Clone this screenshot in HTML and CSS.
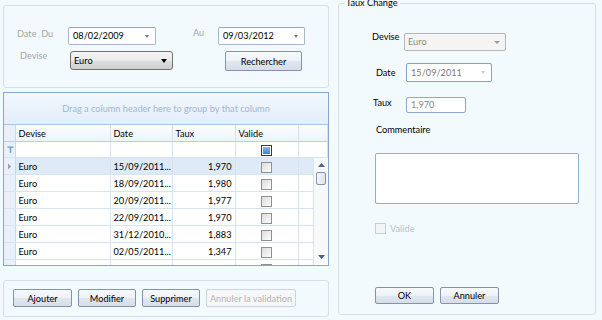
FILE: index.html
```html
<!DOCTYPE html>
<html lang="fr">
<head>
  <meta charset="UTF-8" />
  <title>Taux de change</title>
  <link rel="stylesheet" href="styles.css">
</head>
<body>
  <div class="window">
    <div class="left">
      <div class="box search">
        <div class="row row-dates">
          <label class="lbl lbl-du">Date&nbsp; Du</label>
          <div class="date-input w-du"><span>08/02/2009</span><i class="drop"></i></div>
          <label class="lbl lbl-au">Au</label>
          <div class="date-input w-au"><span>09/03/2012</span><i class="drop"></i></div>
        </div>
        <div class="row row-devise">
          <label class="lbl lbl-devise">Devise</label>
          <div class="combo"><span>Euro</span><i class="arrow"></i></div>
          <button class="btn btn-search">Rechercher</button>
        </div>
      </div>

      <div class="grid">
        <div class="group-panel">Drag a column header here to group by that column</div>
        <table class="grid-head">
          <colgroup>
            <col style="width:11px"><col style="width:95px"><col style="width:62px">
            <col style="width:63px"><col style="width:63px"><col>
          </colgroup>
          <tr class="headers">
            <th class="ind"></th><th>Devise</th><th>Date</th><th>Taux</th><th>Valide</th><th></th>
          </tr>
          <tr class="filter">
            <td class="ind">
              <svg width="7" height="7" viewBox="0 0 7 7"><path d="M0.5 0.5h6v1.2h-2.3v5h-1.4v-5h-2.3z" fill="#6d98cf"/></svg>
            </td>
            <td></td><td></td><td></td>
            <td class="chk-cell"><span class="chk chk-blue"></span></td><td></td>
          </tr>
        </table>
        <div class="grid-body">
          <table class="rows">
            <colgroup>
              <col style="width:11px"><col style="width:95px"><col style="width:62px">
              <col style="width:63px"><col style="width:63px"><col>
            </colgroup>
            <tr class="selected">
              <td class="ind"><svg width="5" height="7" viewBox="0 0 5 7"><path d="M1 0.5l3 3-3 3z" fill="#8aa2c0"/></svg></td>
              <td>Euro</td><td>15/09/2011...</td><td class="num">1,970</td><td class="chk-cell"><span class="chk"></span></td><td></td>
            </tr>
            <tr><td class="ind"></td><td>Euro</td><td>18/09/2011...</td><td class="num">1,980</td><td class="chk-cell"><span class="chk"></span></td><td></td></tr>
            <tr><td class="ind"></td><td>Euro</td><td>20/09/2011...</td><td class="num">1,977</td><td class="chk-cell"><span class="chk"></span></td><td></td></tr>
            <tr><td class="ind"></td><td>Euro</td><td>22/09/2011...</td><td class="num">1,970</td><td class="chk-cell"><span class="chk"></span></td><td></td></tr>
            <tr><td class="ind"></td><td>Euro</td><td>31/12/2010...</td><td class="num">1,883</td><td class="chk-cell"><span class="chk"></span></td><td></td></tr>
            <tr><td class="ind"></td><td>Euro</td><td>02/05/2011...</td><td class="num">1,347</td><td class="chk-cell"><span class="chk"></span></td><td></td></tr>
            <tr><td class="ind"></td><td>Euro</td><td>04/05/2011...</td><td class="num">1,333</td><td class="chk-cell"><span class="chk"></span></td><td></td></tr>
          </table>
          <div class="scrollbar">
            <svg class="sb-arrow" width="7" height="4" viewBox="0 0 7 4"><path d="M0 4l3.5-4 3.5 4z" fill="#4d6185"/></svg>
            <div class="thumb"></div>
            <div class="sb-space"></div>
            <svg class="sb-arrow" width="7" height="4" viewBox="0 0 7 4"><path d="M0 0l3.5 4 3.5-4z" fill="#4d6185"/></svg>
          </div>
        </div>
      </div>

      <div class="box actions">
        <button class="btn w-ajouter">Ajouter</button>
        <button class="btn w-modifier">Modifier</button>
        <button class="btn w-supprimer">Supprimer</button>
        <button class="btn w-annuler" disabled>Annuler la validation</button>
      </div>
    </div>

    <fieldset class="detail">
      <legend>Taux Change</legend>
      <div class="detail-body">
        <div class="field f-devise">
          <label>Devise</label>
          <div class="combo combo-off"><span>Euro</span><i class="arrow"></i></div>
        </div>
        <div class="field f-date">
          <label>Date</label>
          <div class="date-input date-off"><span>15/09/2011</span><i class="drop"></i></div>
        </div>
        <div class="field f-taux">
          <label>Taux</label>
          <div class="text-input">1,970</div>
        </div>
        <div class="f-comment">Commentaire</div>
        <div class="memo"></div>
        <div class="f-valide"><span class="chk chk-off"></span>Valide</div>
        <div class="detail-buttons">
          <button class="btn w-ok">OK</button>
          <button class="btn w-cancel">Annuler</button>
        </div>
      </div>
    </fieldset>
  </div>
</body>
</html>
```

FILE: styles.css
```css
body {
  margin: 0;
  background: #f3fafd;
  font-family: Lato, "Open Sans", sans-serif;
  font-size: 9.2px;
  line-height: 13px;
  color: #000;
}
.window {
  display: flex;
  align-items: flex-start;
  padding-left: 3px;
  height: 320px;
  overflow: hidden;
}
.left {
  width: 326px;
  display: flex;
  flex-direction: column;
}
.box {
  border: 1px solid #d6e0e8;
  border-radius: 3px;
  box-sizing: border-box;
}

/* search box */
.search {
  margin-top: 5px;
  height: 83px;
  padding: 21px 0 0 13px;
}
.row {
  display: flex;
  align-items: flex-start;
}
.lbl {
  color: #a6a6a6;
}
.lbl-du { width: 51px; margin-top: 0; }
.lbl-au { width: 25px; margin-left: 37px; margin-top: -1px; }
.row-devise { margin-top: 6px; }
.lbl-devise { width: 50px; padding-left: 3px; margin-top: -2px; }

.date-input {
  position: relative;
  box-sizing: border-box;
  height: 18px;
  line-height: 16px;
  background: #fff;
  border: 1px solid #a4b6d0;
  border-top-color: #8aa6cc;
  border-radius: 2px;
  padding: 0 0 0 4px;
  color: #000;
}
.w-du { width: 88px; }
.w-au { width: 87px; }
.drop {
  position: absolute;
  right: 6px;
  top: 7px;
  border-left: 2px solid transparent;
  border-right: 2px solid transparent;
  border-top: 3px solid #6b7c93;
}
.combo {
  position: relative;
  box-sizing: border-box;
  width: 103px;
  height: 19px;
  line-height: 17px;
  border: 1px solid #707070;
  border-radius: 3px;
  background: linear-gradient(#f4f4f4, #ebebeb 50%, #dedede 51%, #d0d0d0);
  padding: 0 0 0 3px;
}
.arrow {
  position: absolute;
  right: 5px;
  top: 7px;
  border-left: 3px solid transparent;
  border-right: 3px solid transparent;
  border-top: 4px solid #000;
}
.btn {
  box-sizing: border-box;
  height: 18px;
  font: inherit;
  color: #000;
  white-space: nowrap;
  border: 1px solid #8094ad;
  border-radius: 2px;
  background: linear-gradient(#f7f9fc, #eef2f7 50%, #e1e7ef 51%, #d6dde7);
  padding: 0;
}
.btn-search {
  width: 77px;
  height: 20px;
  margin-left: 52px;
}
.btn:disabled {
  color: #b4b4b4;
  border-color: #ccd5df;
  background: #f5f7f9;
}

/* grid */
.grid {
  margin-top: 4px;
  height: 174px;
  box-sizing: border-box;
  border: 1px solid #84a6d4;
  overflow: hidden;
  background: #fff;
}
.group-panel {
  height: 31px;
  line-height: 31px;
  border-bottom: 1px solid #a9c3e4;
  background: linear-gradient(#f2f7fd, #e3eefa);
  text-align: center;
  color: #a3b6ce;
}
table {
  border-collapse: collapse;
  table-layout: fixed;
}
.grid-head {
  width: 324px;
}
th, td {
  padding: 0 0 0 3px;
  text-align: left;
  font-weight: normal;
  white-space: nowrap;
  overflow: hidden;
}
.headers th {
  height: 16px;
  background: linear-gradient(#fbfdff, #eef4fb);
  border-right: 1px solid #d3e0ef;
  border-bottom: 1px solid #b9cfe9;
}
.filter td, .rows td {
  border-right: 1px solid #d5e3f3;
  border-bottom: 1px solid #d5e3f3;
}
.filter td { height: 15px; }
td.ind, th.ind {
  padding: 0 0 0 3px;
  background: #e9f0f9;
  border-right: 1px solid #c9d9ee;
}
.ind svg { display: block; }
.chk-cell { text-align: center; padding: 0; }
.chk {
  display: inline-block;
  box-sizing: border-box;
  width: 11px;
  height: 11px;
  vertical-align: middle;
  border: 1px solid #8e8f8f;
  background: linear-gradient(135deg, #dcdcdc, #fdfdfd);
}
.chk-blue {
  border-color: #3a3a3a;
  background: linear-gradient(#8cc2ee, #2b7fd0);
  box-shadow: inset 0 0 0 1px #fff;
}
.grid-body {
  display: flex;
}
.rows {
  width: 310px;
}
.rows td { height: 16px; }
.rows .num { text-align: right; padding: 0 3px 0 0; }
.rows .selected td { background: #deeaf8; }
.rows .selected td.ind { background: #e9f0f9; }
.scrollbar {
  width: 14px;
  height: 106px;
  flex: none;
  display: flex;
  flex-direction: column;
  align-items: center;
  background: #f7f9fb;
  padding-top: 5px;
  box-sizing: border-box;
}
.sb-arrow { flex: none; }
.thumb {
  width: 10px;
  height: 13px;
  margin-top: 5px;
  box-sizing: border-box;
  border: 1px solid #8593a6;
  border-radius: 2px;
  background: linear-gradient(90deg, #f3f5f8, #dfe4ea);
}
.sb-space { flex: 1; }
.scrollbar .sb-arrow:last-child { margin-bottom: 5px; }

/* bottom buttons */
.actions {
  margin-top: 14px;
  height: 37px;
  display: flex;
  gap: 6px;
  padding: 8px 0 0 9px;
}
.w-ajouter { width: 59px; }
.w-modifier { width: 58px; }
.w-supprimer { width: 58px; }
.w-annuler { width: 90px; }

/* detail panel */
.detail {
  margin: -4px 0 0 9px;
  width: 258px;
  height: 319px;
  box-sizing: border-box;
  border: 1px solid #d6e0e8;
  border-radius: 3px;
  padding: 0;
}
legend {
  margin-left: 5px;
  padding: 0 2px;
  color: #000;
  line-height: 14px;
}
.detail-body {
  padding-left: 33px;
  display: flex;
  flex-direction: column;
  align-items: flex-start;
}
.field {
  display: flex;
  align-items: flex-start;
}
.field label { width: 32px; }
.f-devise { margin-top: 23px; }
.f-devise label { margin-top: -3px; }
.combo-off {
  width: 102px;
  height: 18px;
  line-height: 16px;
  background: #f4f4f4;
  border-color: #b3b7ba;
  border-radius: 2px;
  color: #8a8a8a;
}
.combo-off .arrow {
  border-top: 3px solid #9a9a9a;
}
.f-date { margin-top: 12px; }
.f-date label { margin-top: 3px; padding-left: 4px; width: 30px; }
.date-off {
  width: 86px;
  height: 19px;
  line-height: 17px;
  border-color: #7ea1cc;
  color: #7a7a7a;
}
.date-off .drop { border-top-color: #c5cdd8; }
.f-taux { margin-top: 15px; }
.f-taux label { margin-top: -1px; padding-left: 1px; width: 33px; }
.text-input {
  width: 60px;
  height: 16px;
  line-height: 14px;
  box-sizing: border-box;
  background: #fff;
  border: 1px solid #8ea8cc;
  border-radius: 2px;
  padding: 0 0 0 4px;
  color: #8a8a8a;
}
.f-comment {
  margin: 10px 0 0 4px;
}
.memo {
  margin: 17px 0 0 3px;
  width: 204px;
  height: 51px;
  box-sizing: border-box;
  background: #fff;
  border: 1px solid #8eacd5;
  border-radius: 2px;
}
.f-valide {
  margin: 18px 0 0 3px;
  display: flex;
  align-items: center;
  color: #b8c2cc;
}
.chk-off {
  margin-right: 4px;
  border-color: #c9ced4;
  background: #f2f4f6;
}
.detail-buttons {
  margin: 52px 0 0 3px;
  display: flex;
  gap: 6px;
}
.w-ok { width: 59px; height: 17px; }
.w-cancel { width: 59px; height: 17px; }
```
